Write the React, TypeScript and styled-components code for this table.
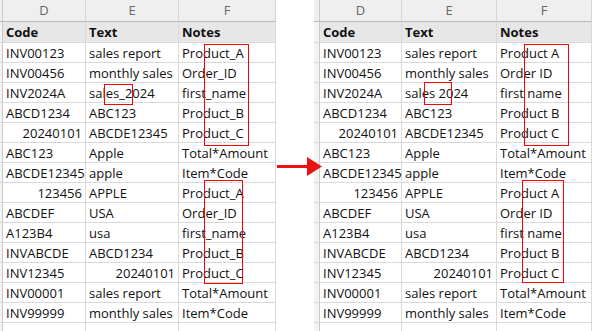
import React from "react";
import styled, { createGlobalStyle } from "styled-components";

const Global = createGlobalStyle`
  html, body { margin: 0; padding: 0; background: #ffffff; }
  body { width: 600px; height: 331px; overflow: hidden; }
  #root { width: 600px; height: 331px; }
`;

const Stage = styled.div`
  position: relative;
  width: 600px;
  height: 331px;
  overflow: hidden;
  display: flex;
  align-items: flex-start;
  font-family: "Open Sans", "Noto Sans", "Liberation Sans", sans-serif;
`;

const Sheet = styled.div<{ $cols: string; $ml: number }>`
  display: grid;
  grid-template-columns: ${(p) => p.$cols};
  margin-left: ${(p) => p.$ml}px;
`;

const ColHead = styled.div`
  height: 22px;
  box-sizing: border-box;
  background: #efefef;
  border-right: 1px solid #d6d6d6;
  border-bottom: 1px solid #b8b8b8;
  color: #666666;
  font-size: 13px;
  line-height: 21px;
  text-align: center;
`;

const Cell = styled.div<{ $head?: boolean; $right?: boolean; $h?: number }>`
  height: ${(p) => p.$h ?? 20}px;
  box-sizing: border-box;
  padding: 1px 3px 0 3px;
  background: ${(p) => (p.$head ? "#e7e7e7" : "#ffffff")};
  border-right: 1px solid #d9d9d9;
  border-bottom: 1px solid #d9d9d9;
  color: #111111;
  font-size: 13px;
  font-weight: ${(p) => (p.$head ? 700 : 400)};
  line-height: ${(p) => (p.$h ?? 20) - 2}px;
  white-space: nowrap;
  text-align: ${(p) => (p.$right ? "right" : "left")};
`;

const Stub = styled.div<{ $head?: boolean; $h?: number }>`
  height: ${(p) => p.$h ?? 20}px;
  box-sizing: border-box;
  background: ${(p) => (p.$head ? "#efefef" : "#f3f3f3")};
  border-right: 1px solid #c9c9c9;
  border-bottom: 1px solid ${(p) => (p.$head ? "#b8b8b8" : "#d9d9d9")};
`;

const Mark = styled.div`
  position: absolute;
  box-sizing: border-box;
  border: 1px solid #ff0000;
  pointer-events: none;
`;

const Arrow = styled.svg`
  position: absolute;
  left: 276px;
  top: 157px;
`;

type Row = [string, string, string, boolean?, boolean?];

const leftRows: Row[] = [
  ["INV00123", "sales report", "Product_A"],
  ["INV00456", "monthly sales", "Order_ID"],
  ["INV2024A", "sales_2024", "first_name"],
  ["ABCD1234", "ABC123", "Product_B"],
  ["20240101", "ABCDE12345", "Product_C", true],
  ["ABC123", "Apple", "Total*Amount"],
  ["ABCDE12345", "apple", "Item*Code"],
  ["123456", "APPLE", "Product_A", true],
  ["ABCDEF", "USA", "Order_ID"],
  ["A123B4", "usa", "first_name"],
  ["INVABCDE", "ABCD1234", "Product_B"],
  ["INV12345", "20240101", "Product_C", false, true],
  ["INV00001", "sales report", "Total*Amount"],
  ["INV99999", "monthly sales", "Item*Code"],
];

const rightRows: Row[] = leftRows.map(([a, b, c, ra, rb]) => [
  a,
  b.replace(/_/g, " "),
  c.replace(/_/g, " "),
  ra,
  rb,
]);

function SheetView({ rows, cols, ml }: { rows: Row[]; cols: string; ml: number }) {
  return (
    <Sheet $cols={cols} $ml={ml}>
      <Stub $head $h={22} />
      <ColHead>D</ColHead>
      <ColHead>E</ColHead>
      <ColHead>F</ColHead>
      <Stub $h={21} />
      <Cell $head $h={21}>Code</Cell>
      <Cell $head $h={21}>Text</Cell>
      <Cell $head $h={21}>Notes</Cell>
      {rows.map(([a, b, c, ra, rb], i) => (
        <React.Fragment key={i}>
          <Stub />
          <Cell $right={ra}>{a}</Cell>
          <Cell $right={rb}>{b}</Cell>
          <Cell>{c}</Cell>
        </React.Fragment>
      ))}
      <Stub />
      <Cell />
      <Cell />
      <Cell />
    </Sheet>
  );
}

export default function App() {
  return (
    <>
      <Global />
      <Stage>
        <SheetView rows={leftRows} cols="3px 83px 93px 97px" ml={0} />
        <SheetView rows={rightRows} cols="6px 82px 95px 95px" ml={38} />

        <Mark style={{ left: 204, top: 44, width: 45, height: 102 }} />
        <Mark style={{ left: 104, top: 84, width: 29, height: 21 }} />
        <Mark style={{ left: 204, top: 180, width: 39, height: 104 }} />

        <Mark style={{ left: 524, top: 44, width: 45, height: 102 }} />
        <Mark style={{ left: 424, top: 82, width: 28, height: 23 }} />
        <Mark style={{ left: 522, top: 180, width: 42, height: 103 }} />

        <Arrow width="47" height="19" viewBox="0 0 47 19">
          <rect x="1" y="8" width="31" height="3" fill="#ee1111" />
          <polygon points="31,0 46,9.5 31,19" fill="#ee1111" />
        </Arrow>
      </Stage>
    </>
  );
}
